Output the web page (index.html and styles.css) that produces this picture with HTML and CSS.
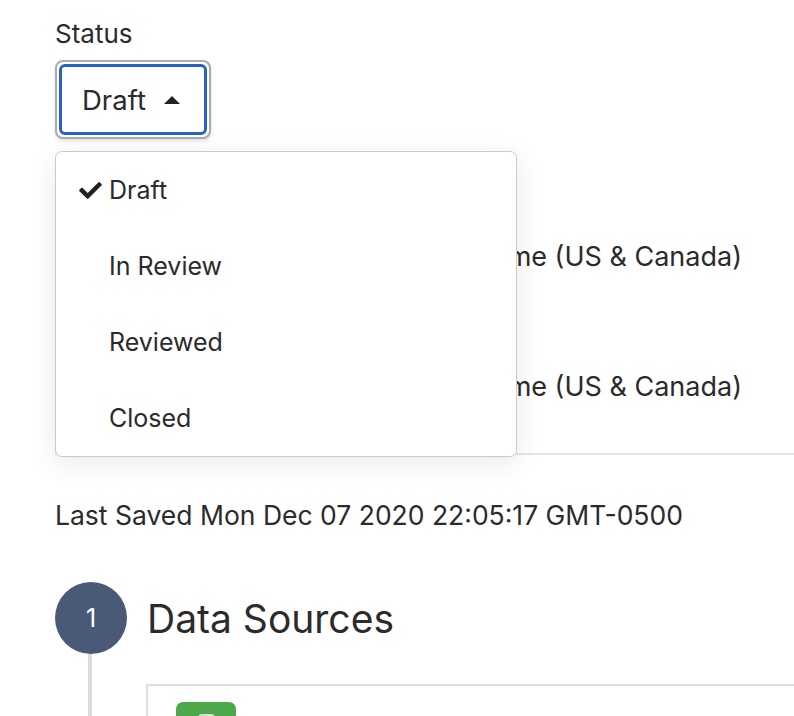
FILE: index.html
```html
<!DOCTYPE html>
<html lang="en">
<head>
<meta charset="utf-8">
<title>Status</title>
<link rel="stylesheet" href="styles.css">
</head>
<body>
<div class="page">
  <div class="status-field">
    <div class="field-label">Status</div>
    <div class="select">
      <div class="select-ring">
        <button class="select-btn" type="button">
          <span>Draft</span>
          <svg class="caret" width="16" height="8" viewBox="0 0 16 8"><path d="M0 8 L8 0 L16 8 Z" fill="#222"/></svg>
        </button>
      </div>
      <ul class="menu">
        <li class="menu-item">
          <svg class="check" width="23" height="17" viewBox="0 64 512 384"><path fill="#222" d="M173.898 439.404l-166.4-166.4c-9.997-9.997-9.997-26.206 0-36.204l36.203-36.204c9.997-9.998 26.207-9.998 36.204 0L192 312.69 432.095 72.596c9.997-9.997 26.207-9.997 36.204 0l36.203 36.204c9.997 9.997 9.997 26.206 0 36.204l-294.4 294.401c-9.998 9.997-26.207 9.997-36.204-.001z"/></svg>
          <span>Draft</span>
        </li>
        <li class="menu-item"><span class="check-space"></span><span>In Review</span></li>
        <li class="menu-item"><span class="check-space"></span><span>Reviewed</span></li>
        <li class="menu-item"><span class="check-space"></span><span>Closed</span></li>
      </ul>
    </div>
  </div>

  <div class="rows">
    <div class="row row-first"><span class="row-label">Start</span><span class="row-value">Eastern Time (US &amp; Canada)</span></div>
    <div class="row row-last"><span class="row-label">End</span><span class="row-value">Eastern Time (US &amp; Canada)</span></div>
  </div>

  <p class="saved">Last Saved Mon Dec 07 2020 22:05:17 GMT-0500</p>

  <div class="step">
    <div class="step-head">
      <div class="step-num">1</div>
      <h2 class="step-title">Data Sources</h2>
    </div>
    <div class="step-body">
      <div class="source-card">
        <div class="source-icon"><span class="source-glyph"></span></div>
      </div>
    </div>
  </div>
</div>
</body>
</html>
```

FILE: styles.css
```css
* { box-sizing: border-box; }
html, body { margin: 0; padding: 0; background: #fff; }
body {
  font-family: Inter, "Noto Sans", sans-serif;
  color: #2b2b2b;
  overflow: hidden;
  height: 716px;
}
.page { padding-left: 55px; }

.status-field { padding-top: 19px; }
.field-label { font-size: 26px; line-height: 30px; }

.select { position: relative; margin-top: 11px; display: inline-block; }
.select-ring {
  display: inline-block;
  border: 2px solid #ababab;
  border-radius: 8px;
  padding: 2px;
  box-shadow: 0 2px 4px rgba(0,0,0,0.12);
  background: #fff;
}
.select-btn {
  display: flex;
  align-items: center;
  gap: 18px;
  width: 148px;
  height: 71px;
  padding: 0 0 0 20px;
  border: 3px solid #2762c6;
  border-radius: 6px;
  background: #fff;
  font-family: inherit;
  font-size: 27.5px;
  color: #2b2b2b;
}
.caret { display: block; }

.menu {
  position: absolute;
  top: calc(100% + 12px);
  left: 0;
  width: 462px;
  margin: 0;
  padding: 0;
  list-style: none;
  background: #fff;
  border: 1.5px solid #c9c9c9;
  border-radius: 7px;
  box-shadow: 0 6px 28px rgba(0,0,0,0.09);
  z-index: 2;
}
.menu-item {
  display: flex;
  align-items: center;
  gap: 7px;
  height: 76px;
  padding-left: 23px;
  font-size: 25px;
}
.check { display: block; }
.check-space { width: 23px; flex: none; }

.row {
  display: flex;
  justify-content: space-between;
  align-items: flex-start;
  padding-right: 52px;
  font-size: 27px;
  line-height: 32px;
}
.row-first { margin-top: 57px; height: 130px; padding-top: 45px; }
.row-last { height: 129px; padding-top: 45px; border-bottom: 2px solid #e6e6e6; }

.saved { margin: 45px 0 0; font-size: 26.5px; line-height: 30px; }

.step { margin-top: 52px; }
.step-head { display: flex; align-items: center; gap: 20px; }
.step-num {
  width: 72px; height: 72px;
  border-radius: 50%;
  background: #4a5a76;
  color: #fff;
  font-size: 25px;
  display: flex; align-items: center; justify-content: center;
}
.step-title { margin: 0; font-weight: 400; font-size: 39px; color: #2b2b2b; }
.step-body {
  margin-left: 33px;
  border-left: 4px solid #dcdcdc;
  padding: 30px 0 0 54px;
  height: 200px;
}
.source-card {
  border: 2px solid #dedede;
  border-right: none;
  height: 120px;
  padding: 16px 0 0 28px;
}
.source-icon {
  width: 60px; height: 60px;
  border-radius: 7px;
  background: #4ca84a;
  display: flex; justify-content: center; padding-top: 12px;
}
.source-glyph { width: 17px; height: 20px; background: #cfe8cf; border-radius: 4px; }
```
